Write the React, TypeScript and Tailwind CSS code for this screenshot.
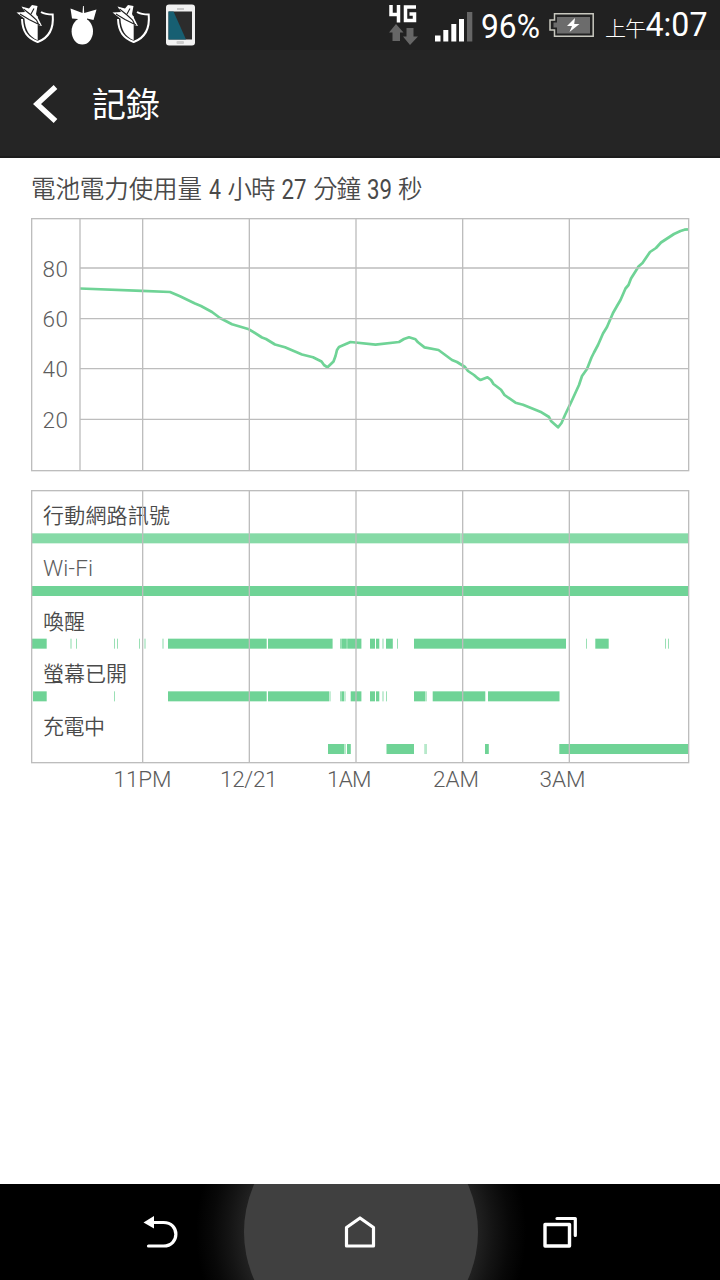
import React from "react";

const CJK = "font-['Roboto','Noto_Sans_CJK_TC',sans-serif]";

const HOURS = [
  { x: 142.67, label: "11PM", left: 113.5, width: 58 },
  { x: 249.33, label: "12/21", left: 220, width: 57.5 },
  { x: 356, label: "1AM", left: 327, width: 44.5 },
  { x: 462.67, label: "2AM", left: 433, width: 46 },
  { x: 569.33, label: "3AM", left: 539.5, width: 46 },
];

const LEVELS = [
  { y: 268, label: "80" },
  { y: 318.67, label: "60" },
  { y: 368.67, label: "40" },
  { y: 419.33, label: "20" },
];

const LINE =
  "80,288.5 142,290.8 170,292 180,296.3 195,303.5 201,306 212,312 220,318 232,324.3 249,329.3 262,337.5 266,339 275,344.5 285,347.3 302,354.5 313,357.3 321.5,361.5 324,365 327.5,367.3 333.5,361.5 335.5,356 337,350 339,347 350.5,342 375.5,344.6 399,342 404,339 409,337.3 415.5,339.3 418,342.3 424.5,347.4 438.5,350 452,360 457,362 465,367 468,371 474,375 478,378.5 480.5,380 487.5,377.3 491,380 493.5,384 501,389.7 504.5,395 515.5,402.7 523,404.7 541.5,412.3 549,417 551,421 558,427.3 561.5,423 565,415 571,402.5 579,385 582,376 587,369 591.5,357.5 594,352.5 598,345 603,333.5 607,327 613,313 617,306 620.5,300 625.5,288.5 628.5,285 631,278.5 637,269 638.5,266.5 642.5,263 650,252 656,248 661,242.5 674,234 680.5,231 684.5,229.7 688,229.3";

// [start, end, opacity]
type Segment = [number, number, number?];

const ROWS: { label: string; width: number; opacity?: number; bars: Segment[] }[] = [
  { label: "行動網路訊號", width: 127, opacity: 0.84, bars: [[32, 460.5], [460.5, 461.3, 0.7], [461.3, 688]] },
  { label: "Wi-Fi", width: 50, bars: [[32, 688]] },
  {
    label: "喚醒",
    width: 42,
    bars: [
      [32, 46.7], [70, 72, 0.4], [76, 77, 0.7], [114, 115, 0.7], [117, 118, 0.7],
      [139, 140, 0.7], [144, 146, 0.4], [162, 164, 0.4], [168, 266.7], [268, 332.6],
      [340, 342, 0.7], [342, 346], [346, 348, 0.8], [348, 361.4], [370, 375],
      [376, 379.3], [382, 384, 0.4], [386, 392.8], [397, 398, 0.7], [414, 566],
      [586, 587, 0.7], [595.3, 608.7], [665, 666, 0.7], [668, 669, 0.7],
    ],
  },
  {
    label: "螢幕已開",
    width: 84,
    bars: [
      [33, 46.7], [114, 115, 0.7], [168, 266.7], [268, 329], [329, 331, 0.4],
      [340, 342, 0.7], [342, 344], [344, 346, 0.4], [350.7, 361.4], [370, 375],
      [376, 379.3], [382, 384, 0.4], [386, 387, 0.7], [414, 425], [425, 427, 0.5],
      [432.7, 485.3], [488, 559.5],
    ],
  },
  {
    label: "充電中",
    width: 62,
    bars: [
      [328, 344], [344, 346, 0.5], [347, 350.8], [386.5, 414], [424, 425, 0.4],
      [425, 427, 0.5], [485, 488.8], [559.3, 688],
    ],
  },
];

function ShieldIcon() {
  return (
    <svg width="40" height="42" viewBox="0 0 40 42" fill="none">
      <path d="M6 17C6.5 30 11.5 36 21.7 40C32.5 36 38 27 36.7 12.5C32 12.5 28.5 12 25 10" stroke="#fff" strokeWidth="2" />
      <path d="M8.5 17C9 27.5 13 34.5 21.7 38.3V14Z" fill="#fff" />
      <path d="M0.5 10.5L9 10L5.5 4.5L13 6.5L16 3L21.5 4L20 12L26 24L14 21Z" fill="#fff" />
      <path d="M7.5 7L15 13L20.5 18L23 23M4 12L13 17.5L24 23M18 6.5L15 12" stroke="#212121" strokeWidth="1.1" />
    </svg>
  );
}

function RadishIcon() {
  return (
    <svg width="28" height="40" viewBox="0 0 28 40" fill="#fff">
      <ellipse cx="12.3" cy="26.3" rx="10.7" ry="13.2" />
      <path d="M0.5 3.5L12.5 8L13 1H13.8L14.2 8L26.5 4.5L23.5 15L17 13.5V17H8V14L2 13.5Z" />
    </svg>
  );
}

function PhoneIcon() {
  return (
    <svg width="30" height="42" viewBox="0 0 30 42">
      <rect x="0" y="0.5" width="29" height="41" rx="3" fill="#f1f1f1" />
      <rect x="2.5" y="7.5" width="23.5" height="28" fill="#2c2c2c" />
      <path d="M2.5 7.5H7.5L20 35.5H2.5Z" fill="#175f72" />
      <path d="M11 5H18" stroke="#bbb" strokeWidth="1.5" />
      <rect x="10.5" y="37" width="7.5" height="3" rx="1" fill="#ccc" />
    </svg>
  );
}

function NetworkIcon() {
  return (
    <svg width="30" height="42" viewBox="0 0 30 42">
      <path d="M2 1V10.5H10M9.5 1V18.5" stroke="#fff" strokeWidth="3.5" fill="none" />
      <path d="M27 3H16.5V16.5H25.5V10H20.5" stroke="#fff" strokeWidth="3.5" fill="none" />
      <path d="M7 20L14.5 28.5H11V37H3.5V28.5H0Z" fill="#666" />
      <path d="M17.5 24H24.5V32.5H29L21 41L14 32.5H17.5Z" fill="#666" />
    </svg>
  );
}

function SignalIcon() {
  return (
    <svg width="38" height="30" viewBox="0 0 38 30" fill="#fff">
      <rect x="0" y="23.5" width="5.5" height="6" />
      <rect x="8.3" y="18" width="5" height="11.5" />
      <rect x="16.3" y="12" width="5" height="17.5" />
      <rect x="24" y="7" width="5" height="22.5" />
      <rect x="32" y="0" width="5.3" height="29.5" fill="#666" />
    </svg>
  );
}

function BatteryIcon() {
  return (
    <svg width="45" height="24" viewBox="0 0 45 24">
      <path d="M5.5 0.8H44.2V23.2H5.5V17H1V7H5.5Z" fill="#222" stroke="#c8c8bf" strokeWidth="1.5" />
      <path d="M8 4H41V20.5H8V14.5H4.5V9.5H8Z" fill="#6c6c6c" />
      <path d="M26 5L18 13H23L20.5 19L30.5 11H25.2Z" fill="#fff" />
    </svg>
  );
}

function StatusBar() {
  return (
    <div className="flex h-[50px] items-start bg-[#212121] text-white">
      <div className="flex pl-4 pt-[2px]">
        <ShieldIcon />
        <div className="ml-[14px] mt-[3px]">
          <RadishIcon />
        </div>
        <div className="ml-[14px]">
          <ShieldIcon />
        </div>
        <div className="ml-[14px] mt-[2px]">
          <PhoneIcon />
        </div>
      </div>
      <div className="ml-auto flex items-start pr-3">
        <div className="mt-1">
          <NetworkIcon />
        </div>
        <div className="ml-4 mt-3">
          <SignalIcon />
        </div>
        <svg width="60" height="50" className={`${CJK} ml-2 overflow-visible`} fill="#fff">
          <text x="0" y="37.5" fontSize="33" textLength="59" lengthAdjust="spacingAndGlyphs">96%</text>
        </svg>
        <div className="ml-2 mt-[13px]">
          <BatteryIcon />
        </div>
        <svg width="103" height="50" className={`${CJK} ml-[11px] overflow-visible`} fill="#fff">
          <text x="0" y="35.5" fontSize="21" textLength="41" fontWeight="300">上午</text>
          <text x="40.5" y="36" fontSize="33" textLength="62" lengthAdjust="spacingAndGlyphs">4:07</text>
        </svg>
      </div>
    </div>
  );
}

function Header() {
  return (
    <header className="flex h-[108px] items-center border-b-2 border-[#1c1c1c] bg-[#252525] pl-[33px] text-white">
      <svg width="25" height="38" viewBox="0 0 25 38" fill="none" className="mt-px">
        <path d="M22.5 2L4 19L22.5 36" stroke="#fff" strokeWidth="5.4" />
      </svg>
      <h1 className={`${CJK} ml-[34px] mt-[3px] text-[34px] leading-none font-normal`}>記錄</h1>
    </header>
  );
}

function LevelChart() {
  return (
    <svg width="660" height="254" viewBox="30 218 660 254" className={`${CJK} block`}>
      <polyline points={LINE} fill="none" stroke="#6fd396" strokeWidth="2.7" strokeLinejoin="round" />
      <g stroke="#bdbdbd" strokeWidth="1.33" fill="none">
        <rect x="31.67" y="218.67" width="657" height="252" />
        <path d="M80 218.67V470.67" />
        {HOURS.map((h) => (
          <path key={h.label} d={`M${h.x} 218.67V470.67`} />
        ))}
        {LEVELS.map((l) => (
          <path key={l.label} d={`M80 ${l.y}H688.67`} />
        ))}
      </g>
      {LEVELS.map((l) => (
        <text key={l.label} x="42.5" y={l.y + 8.5} fontSize="22.5" fontWeight="300" fill="#5c5c5c" textLength="25.5">
          {l.label}
        </text>
      ))}
    </svg>
  );
}

function ActivityChart() {
  return (
    <svg width="660" height="306" viewBox="30 490 660 306" className={`${CJK} block`}>
      {ROWS.map((row, i) => {
        const latin = row.label === "Wi-Fi";
        return (
          <g key={row.label}>
            <text
              x="43"
              y={523.3 + i * 52.67 + (latin ? 0.5 : 0)}
              fontSize={latin ? 22.5 : 21}
              fontWeight={latin ? 300 : 350}
              fill={latin ? "#5c5c5c" : "#4a4a4a"}
              textLength={row.width}
            >
              {row.label}
            </text>
            <g fill="#6fd396" opacity={row.opacity ?? 1}>
              {row.bars.map(([from, to, opacity]) => (
                <rect key={from} x={from} y={533.33 + i * 52.67} width={to - from} height="10" opacity={opacity ?? 1} />
              ))}
            </g>
          </g>
        );
      })}
      <g stroke="#bdbdbd" strokeWidth="1.33" fill="none">
        <rect x="31.67" y="490.67" width="657" height="272" />
        {HOURS.map((h) => (
          <path key={h.label} d={`M${h.x} 490.67V762.67`} />
        ))}
      </g>
      {HOURS.map((h) => (
        <text key={h.label} x={h.left} y="786.5" fontSize="22.5" fontWeight="300" fill="#5c5c5c" textLength={h.width}>
          {h.label}
        </text>
      ))}
    </svg>
  );
}

function NavBar() {
  return (
    <nav className="flex h-24 justify-center bg-black">
      <svg width="720" height="96" viewBox="0 0 720 96" fill="none">
        <defs>
          <radialGradient id="glow" gradientUnits="userSpaceOnUse" cx="361" cy="48" r="165">
            <stop offset="0.7" stopColor="#222" />
            <stop offset="0.8" stopColor="#141414" />
            <stop offset="0.9" stopColor="#080808" />
            <stop offset="1" stopColor="#000" />
          </radialGradient>
        </defs>
        <rect x="196" width="330" height="96" fill="url(#glow)" />
        <circle cx="361" cy="48" r="117" fill="#404040" />
        <path d="M153 38.5H163.5C180 38.5 180 62 163.5 62H148.5" stroke="#fff" strokeWidth="3.2" strokeLinecap="round" />
        <path d="M143.5 38.5L154 32V44.5Z" fill="#fff" />
        <path d="M346.5 62V43.5L360 34L373.5 43.5V62Z" stroke="#fff" strokeWidth="3.2" strokeLinejoin="round" />
        <path d="M545 40.5H569.5V62H545Z" stroke="#fff" strokeWidth="3.4" strokeLinejoin="round" />
        <path d="M557 34.5H575.3V51.5" stroke="#fff" strokeWidth="3.2" strokeLinecap="round" strokeLinejoin="round" />
      </svg>
    </nav>
  );
}

export default function App() {
  return (
    <div className="flex h-[1280px] w-[720px] flex-col overflow-hidden bg-white">
      <StatusBar />
      <Header />
      <main className="flex-1 px-[30px]">
        <h2 className="h-[60px]">
          <svg width="400" height="60" className={`${CJK} overflow-visible`} fill="#4a4a4a" fontSize="24.5" fontWeight="350">
            <text x="1" y="39.5" textLength="171">電池電力使用量</text>
            <text x="197.5" y="39.5" textLength="48">小時</text>
            <text x="283" y="39.5" textLength="48">分鐘</text>
            <text x="368" y="39.5">秒</text>
            <g fontSize="27" fontWeight="400">
              <text x="179" y="40.5" textLength="12" lengthAdjust="spacingAndGlyphs">4</text>
              <text x="251.5" y="40.5" textLength="25" lengthAdjust="spacingAndGlyphs">27</text>
              <text x="337" y="40.5" textLength="25" lengthAdjust="spacingAndGlyphs">39</text>
            </g>
          </svg>
        </h2>
        <LevelChart />
        <div className="mt-[18px]">
          <ActivityChart />
        </div>
      </main>
      <NavBar />
    </div>
  );
}
